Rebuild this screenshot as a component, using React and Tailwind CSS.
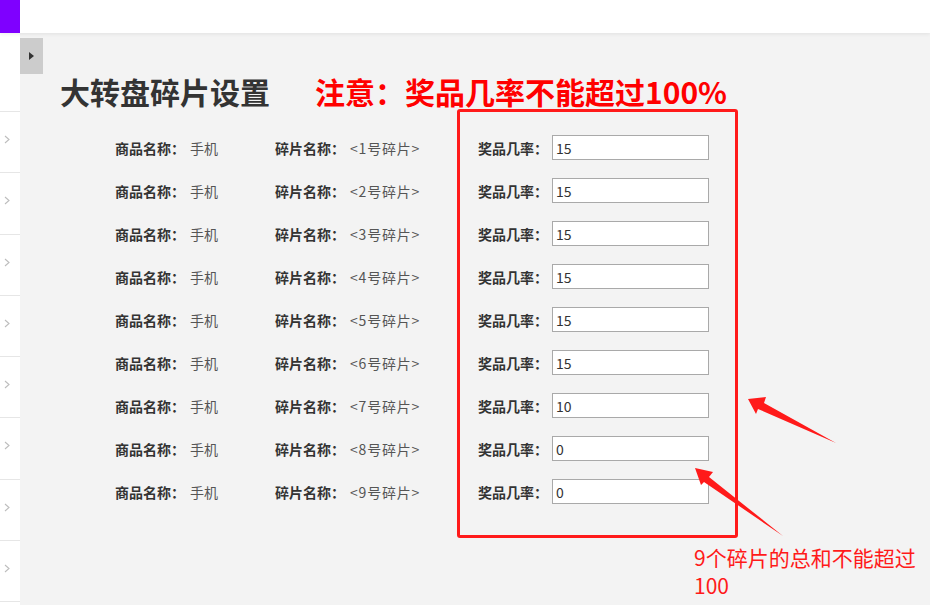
import React from "react";

const rates = ["15", "15", "15", "15", "15", "15", "10", "0", "0"];

function Chevron() {
    return (
        <svg width="6" height="9" viewBox="0 0 6 9" className="ml-[4px] -mt-[5px]">
            <polyline points="1,1 5,4.5 1,8" fill="none" stroke="#bdbdbd" strokeWidth="1.1" />
        </svg>
    );
}

export default function App() {
    const font = { fontFamily: '"Noto Sans CJK SC", "Noto Sans", sans-serif' };

    return (
        <div className="relative w-[930px] h-[605px] overflow-hidden bg-white" style={font}>
            {/* top bar */}
            <div className="h-[33px] flex bg-white shadow-[0_1px_4px_rgba(0,0,0,0.08)] relative z-10">
                <div className="w-[20px] h-full bg-[#7f00ff]" />
            </div>

            <div className="flex h-[572px]">
                {/* collapsed side menu */}
                <div className="w-[20px] bg-white flex flex-col">
                    <div className="h-[78px] shrink-0" />
                    {Array.from({ length: 8 }).map((_, i) => (
                        <div key={i} className="h-[61.25px] shrink-0 border-t border-[#e6e6e6] flex items-center">
                            <Chevron />
                        </div>
                    ))}
                    <div className="border-t border-[#e6e6e6]" />
                </div>

                {/* main */}
                <div className="relative flex-1 bg-[#f3f3f3] pl-[40px] pt-[38px]">
                    <button className="absolute left-0 top-[5px] w-[23px] h-[36px] bg-[#cccccc] flex items-center justify-center">
                        <svg width="5" height="8" viewBox="0 0 5 8">
                            <polygon points="0,0 5,4 0,8" fill="#333" />
                        </svg>
                    </button>

                    <div className="flex items-center h-[40px]">
                        <h1 className="text-[30px] font-bold text-[#333] leading-none">大转盘碎片设置</h1>
                        <span className="ml-[45px] text-[30px] font-bold text-[#ff0000] leading-none">注意：奖品几率不能超过100%</span>
                    </div>

                    <div className="mt-[16px] pl-[55px]">
                        {rates.map((r, i) => (
                            <div key={i} className="h-[43px] flex items-center text-[14px]">
                                <span className="w-[75px] font-bold text-[#333]">商品名称：</span>
                                <span className="w-[85px] text-[#555]">手机</span>
                                <span className="w-[75px] font-bold text-[#333]">碎片名称：</span>
                                <span className="w-[128px] text-[#555] tracking-[0.8px]">&lt;{i + 1}号碎片&gt;</span>
                                <span className="w-[74px] font-bold text-[#333]">奖品几率：</span>
                                <input
                                    defaultValue={r}
                                    className="w-[157px] h-[25px] -mt-[2px] border border-[#a9a9a9] bg-white px-[3px] text-[14px] text-[#333] outline-none"
                                    style={font}
                                />
                            </div>
                        ))}
                    </div>

                    {/* annotation box */}
                    <div className="absolute left-[437px] top-[76px] w-[281px] h-[429px] border-[3px] border-[#ff1a1a] rounded-[3px] pointer-events-none" />
                </div>
            </div>

            {/* annotation arrows */}
            <svg className="absolute left-0 top-0 pointer-events-none" width="930" height="605">
                <polygon points="748,399 766,397 764,403 836,443 758,409 756,414" fill="#ff1a1a" />
                <polygon points="695,468 713,472 709,477 783,536 704,482 701,485" fill="#ff1a1a" />
            </svg>
            <div className="absolute left-[694px] top-[543px] text-[21px] leading-[28px] text-[#ff1a1a]">
                9个碎片的总和不能超过
                <br />
                100
            </div>
        </div>
    );
}
